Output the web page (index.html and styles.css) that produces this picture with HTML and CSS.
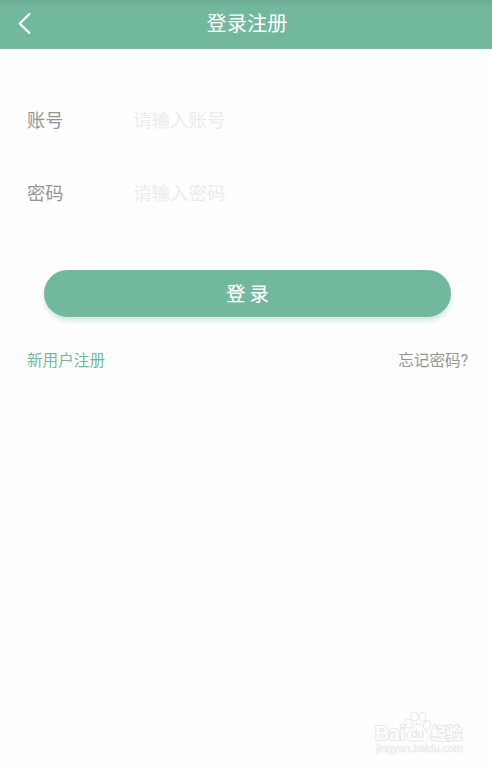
FILE: index.html
```html
<!DOCTYPE html>
<html lang="zh-CN">
<head>
<meta charset="utf-8">
<title>登录注册</title>
<link rel="stylesheet" href="styles.css">
</head>
<body>
<header class="bar">
  <svg class="back" width="14" height="24" viewBox="0 0 14 24"><path d="M11.400 2 1.700 11.500 11.400 21"/></svg>
  <h1 class="title">登录注册</h1>
</header>
<main class="form">
  <label class="row"><span class="name">账号</span><input class="field" type="text" placeholder="请输入账号"></label>
  <label class="row"><span class="name">密码</span><input class="field" type="password" placeholder="请输入密码"></label>
  <button class="login">登 录</button>
  <nav class="links"><a class="register">新用户注册</a><a class="forgot">忘记密码?</a></nav>
</main>
<footer class="brand">
  <svg width="100" height="50" viewBox="370 708 100 50">
    <g class="paw">
      <ellipse cx="408.500" cy="723.500" rx="3.400" ry="4.500" transform="rotate(-15 408.500 723.500)"/>
      <ellipse cx="414.500" cy="716.500" rx="3.500" ry="4.500"/>
      <ellipse cx="422.500" cy="717" rx="3.500" ry="4.500"/>
      <ellipse cx="427" cy="725" rx="3.400" ry="4.500" transform="rotate(15 427 725)"/>
      <path d="M417.500 724c-4 0-5 4-8 7-4 4-4 9 2 10h13c6-1 6-6 2-10-3-3-4-7-9-7z"/>
    </g>
    <text class="latin" x="375" y="740" textLength="30" lengthAdjust="spacingAndGlyphs">Bai</text>
    <text class="du" x="411" y="738" textLength="13" lengthAdjust="spacingAndGlyphs">du</text>
    <text class="han" x="431" y="739" textLength="31">经验</text>
    <text class="url" x="376" y="752" textLength="87" lengthAdjust="spacingAndGlyphs">jingyan.baidu.com</text>
  </svg>
</footer>
</body>
</html>
```
FILE: styles.css
```css
* { box-sizing: border-box; }
body {
  margin: 0;
  height: 766px;
  display: flex;
  flex-direction: column;
  overflow: hidden;
  background: #fefefe;
  font-family: Roboto, "Noto Sans CJK SC", sans-serif;
}
.bar {
  height: 49px;
  padding: 0 16px 1px 18px;
  display: grid;
  grid-template-columns: 14px 1fr 14px;
  align-items: center;
  background: linear-gradient(#6cad94, #72b89d 8px);
  border-bottom: 1px solid #80bfa7;
}
.back { fill: none; stroke: #fff; stroke-width: 2.3; stroke-linecap: round; stroke-linejoin: round; }
.title { margin: 0; padding-top: 1px; text-align: center; font-size: 20.2px; line-height: 30px; font-weight: 400; color: #fff; }
.form { flex: 1; padding: 35px 24px 0 27px; display: flex; flex-direction: column; }
.row { height: 73px; display: flex; align-items: center; }
.name { width: 106px; font-size: 18.200px; line-height: 28px; color: #949494; }
.field {
  flex: 1;
  min-width: 0;
  height: 30px;
  padding: 0;
  border: 0;
  outline: 0;
  background: transparent;
  font: 18.5px/28px Roboto, "Noto Sans CJK SC", sans-serif;
}
.field::placeholder { color: #ebebeb; opacity: 1; }
.login {
  height: 47px;
  margin: 40px 17px 0;
  padding: 2px 0 0;
  border: 0;
  border-radius: 24px;
  background: #72b89d;
  box-shadow: 0 4px 5px rgba(114, 184, 157, .3);
  color: #fff;
  font: 400 19px/45px Roboto, "Noto Sans CJK SC", sans-serif;
  -webkit-text-stroke: .2px #fff;
}
.links { margin-top: 32px; display: flex; justify-content: space-between; font-size: 15.600px; line-height: 24px; }
.register { color: #72b89d; }
.forgot { color: #949494; }
.brand { height: 58px; padding-right: 22px; display: flex; justify-content: flex-end; align-items: flex-start; }
.brand svg { fill: #fefefe; stroke: #e6e6e6; stroke-width: 1; }
.brand text { font-family: "Liberation Sans", "Noto Sans CJK SC", sans-serif; font-weight: 700; paint-order: stroke; stroke-width: 2; }
.brand .latin { font-size: 20px; }
.brand .du { font-size: 13px; font-weight: 400; fill: #dedede; stroke: none; }
.brand .han { font-size: 16px; }
.brand .url { font-size: 10.500px; font-weight: 400; fill: #ededed; stroke: #f0f0f0; stroke-width: .8; }
```
